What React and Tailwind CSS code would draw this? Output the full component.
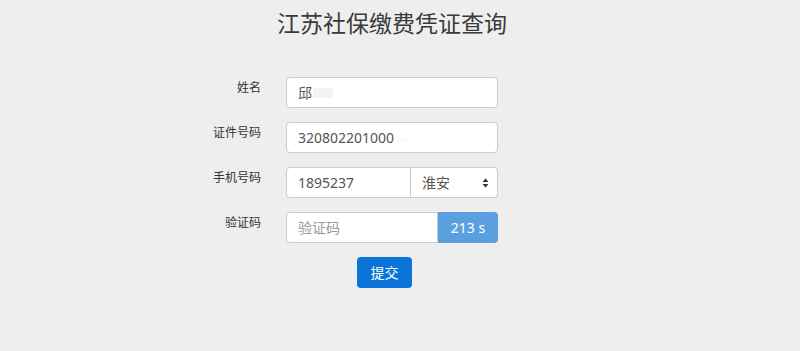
export default function App() {
    const font = { fontFamily: '"Noto Sans", "Noto Sans CJK SC", sans-serif' };

    return (
        <div className="min-h-[351px] w-full bg-[#eeeeee] text-[#333]" style={font}>
            <h1 className="pt-[12px] pr-[16px] text-center text-[23px] leading-[23px] font-normal text-[#3a3a3a]">
                江苏社保缴费凭证查询
            </h1>

            <div className="mx-auto mt-[42px] w-[600px]">
                <div className="grid grid-cols-[161px_212px] gap-x-[25px] gap-y-[14px]">
                    <label className="pt-[5px] text-right text-[12px] leading-[12px] text-[#333]">姓名</label>
                    <div className="flex h-[31px] items-center rounded-[4px] border border-[#ccc] bg-white px-[11px] text-[14px] text-[#555]">
                        <span>邱</span>
                        <span className="ml-[1px] h-[10px] w-[20px] bg-[#f3f3f3]"></span>
                    </div>

                    <label className="pt-[5px] text-right text-[12px] leading-[12px] text-[#333]">证件号码</label>
                    <div className="flex h-[31px] items-center rounded-[4px] border border-[#ccc] bg-white px-[11px] text-[14px] text-[#555]">
                        <span>320802201000</span>
                        <span className="ml-[2px] text-[8px] text-[#ddd]">. . . .</span>
                    </div>

                    <label className="pt-[5px] text-right text-[12px] leading-[12px] text-[#333]">手机号码</label>
                    <div className="flex h-[31px]">
                        <div className="flex w-[125px] items-center rounded-l-[4px] border border-[#ccc] bg-white px-[11px] text-[14px] text-[#555]">
                            1895237
                        </div>
                        <div className="flex flex-1 items-center justify-between rounded-r-[4px] border border-l-0 border-[#ccc] bg-white pr-[8px] pl-[11px] text-[14px] text-[#555]">
                            <span>淮安</span>
                            <svg width="7" height="10" viewBox="0 0 7 10">
                                <path d="M3.5 0.5 L6.5 4 L0.5 4 Z" fill="#333" />
                                <path d="M3.5 9.5 L6.5 6 L0.5 6 Z" fill="#333" />
                            </svg>
                        </div>
                    </div>

                    <label className="pt-[5px] text-right text-[12px] leading-[12px] text-[#333]">验证码</label>
                    <div className="flex h-[31px]">
                        <div className="flex w-[152px] items-center rounded-l-[4px] border border-[#ccc] bg-white px-[11px] text-[14px] text-[#999]">
                            验证码
                        </div>
                        <button className="flex-1 rounded-r-[4px] bg-[#5a9fe0] text-[14px] text-white">213 s</button>
                    </div>
                </div>

                <div className="mt-[14px] pl-[257px]">
                    <button className="h-[31px] w-[55px] rounded-[4px] bg-[#0b74d9] text-[14px] text-white">提交</button>
                </div>
            </div>
        </div>
    );
}
